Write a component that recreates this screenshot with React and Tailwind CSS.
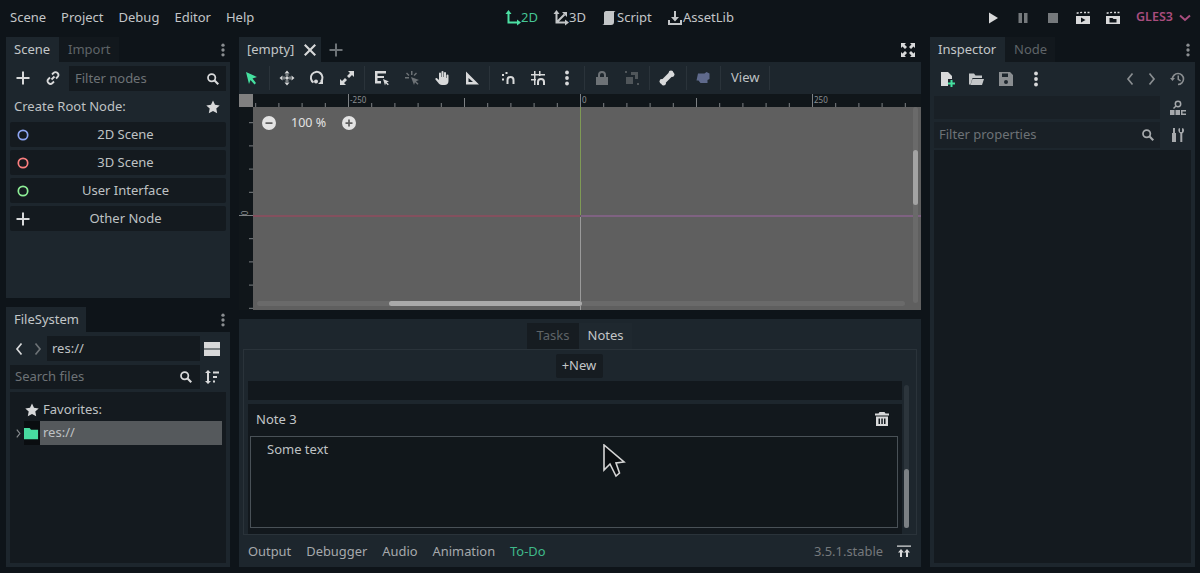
import React from "react";

const Icon = ({ className = "", size = 16, children, vb = "0 0 16 16" }) => (
  <svg width={size} height={size} viewBox={vb} className={"shrink-0 " + className} fill="currentColor">
    {children}
  </svg>
);

const Plus = ({ className }) => (
  <Icon className={className}>
    <path d="M7 1.5h2V7h5.5v2H9v5.500H7V9H1.500V7H7z" />
  </Icon>
);
const Dots = ({ className }) => (
  <Icon className={className}>
    <circle cx="8" cy="2.500" r="1.900" />
    <circle cx="8" cy="8" r="1.900" />
    <circle cx="8" cy="13.500" r="1.900" />
  </Icon>
);
const Search = ({ className }) => (
  <Icon className={className}>
    <circle cx="6.500" cy="6.500" r="4.200" fill="none" stroke="currentColor" strokeWidth="2" />
    <path d="M9.500 9.500l4.500 4.500" stroke="currentColor" strokeWidth="2.400" />
  </Icon>
);
const Star = ({ className }) => (
  <Icon className={className}>
    <path d="M8 1.500l2 4.300 4.700.6-3.400 3.200.9 4.700L8 12l-4.200 2.300.9-4.700L1.300 6.400 6 5.800z" />
  </Icon>
);
const Ring = ({ color }) => (
  <svg width="16" height="16" viewBox="0 0 16 16" className="shrink-0">
    <circle cx="8" cy="8" r="4.700" fill="none" stroke={color} strokeWidth="1.700" />
  </svg>
);
const Chev = ({ dir = "left", className }) => (
  <Icon className={className}>
    <path
      d={dir === "left" ? "M10.500 2.500L6 8l4.500 5.500" : "M5.500 2.500L10 8l-4.500 5.500"}
      fill="none"
      stroke="currentColor"
      strokeWidth="1.700"
    />
  </Icon>
);

const Menu = () => (
  <div className="h-[37px] flex items-center pb-[2px] pl-[10px] pr-[7px] text-[13px]">
    <div className="w-[495px] flex gap-[15px] text-[#c3c6c8]">
      <span>Scene</span>
      <span>Project</span>
      <span>Debug</span>
      <span>Editor</span>
      <span>Help</span>
    </div>
    <div className="flex items-center text-[#c3c6c8]">
      <Icon className="text-[#4ce0a3]">
        <path d="M3.500 3v9.500H13" fill="none" stroke="currentColor" strokeWidth="2" />
        <path d="M3.500 0L6.500 4h-6zM16 12.500l-4 3v-6z" />
      </Icon>
      <span className="w-[32px] text-[#45c795]">2D</span>
      <Icon>
        <path d="M3.500 3v9.500H13M3.500 12.500l8-8" fill="none" stroke="currentColor" strokeWidth="2" />
        <path d="M3.500 0L6.500 4h-6zM16 12.500l-4 3v-6zM14 2v5l-5-5z" />
      </Icon>
      <span className="w-[32px]">3D</span>
      <Icon>
        <path d="M5 1h10c-1.500 0-2 1-2 2v9c0 2-1 3-3 3H1c1.500 0 2-1 2-2V3c0-1 1-2 2-2z" />
      </Icon>
      <span className="w-[50px]">Script</span>
      <Icon>
        <path d="M7 1h2v6h3l-4 4.500L4 7h3zM1 10h2v3h10v-3h2v5H1z" />
      </Icon>
      <span>AssetLib</span>
    </div>
    <div className="ml-auto flex items-center text-[#d8d9da]">
      <Icon className="mr-[14px]">
        <path d="M4 2.500l9 5.500-9 5.500z" />
      </Icon>
      <Icon className="mr-[14px] text-[#75797c]">
        <path d="M3.500 3h3.500v10H3.500zM9 3h3.500v10H9z" />
      </Icon>
      <Icon className="mr-[14px] text-[#75797c]">
        <path d="M3 3h10v10H3z" />
      </Icon>
      <Icon className="mr-[14px]">
        <path d="M1 6h14v8H1zM1.500 2.500l2-.4.3 1.400-2 .4zM5 2l2-.2.2 1.300-2 .2zM9 1.800h2v1.400H9zM12.500 1.800h2v1.400h-2z" />
        <path d="M6 7.500l4.500 2.500L6 12.500z" fill="#0e1419" />
      </Icon>
      <Icon className="mr-[15px]">
        <path d="M1 6h14v8H1zM1.500 2.500l2-.4.3 1.400-2 .4zM5 2l2-.2.2 1.300-2 .2zM9 1.800h2v1.400H9zM12.500 1.800h2v1.400h-2z" />
        <path d="M4.500 8h3l1 1h3v3.500h-7z" fill="#0e1419" />
      </Icon>
      <span className="font-semibold text-[#a84d7e] text-[12.500px] w-[41px]">GLES3</span>
      <Icon className="text-[#a84d7e]">
        <path d="M3 5.500L8 10l5-4.500" fill="none" stroke="currentColor" strokeWidth="2" />
      </Icon>
    </div>
  </div>
);

const Tab = ({ active, children, className = "" }) => (
  <div
    className={
      "h-[25px] flex items-center " +
      (active ? "bg-[#1d262d] text-[#c3c6c8] " : "bg-[#12181d] text-[#5f6468] ") +
      className
    }
  >
    {children}
  </div>
);

const RootButton = ({ icon, label }) => (
  <div className="h-[25px] bg-[#141a1f] rounded-[2px] flex items-center pl-[5px] text-[#bfc2c4] text-[13px]">
    {icon}
    <span className="flex-1 text-center pr-[6px]">{label}</span>
  </div>
);

const ScenePanel = () => (
  <div className="h-[261px] flex flex-col">
    <div className="flex items-center">
      <Tab active className="w-[53px] pl-[8px] text-[13px]">Scene</Tab>
      <Tab className="w-[60px] pl-[9px] text-[13px]">Import</Tab>
      <Dots className="ml-auto size-[14px] text-[#8a8e91]" />
    </div>
    <div className="flex-1 bg-[#1d262d] px-[4px] flex flex-col">
      <div className="h-[32px] flex items-center text-[#d8d9da]">
        <Plus className="ml-[5px]" />
        <Icon className="ml-[14px]">
          <path
            d="M6.500 9.500l3-3M7 4.500l1.500-1.500a2.800 2.800 0 014 4L11 8.500M9 11.500L7.500 13a2.800 2.800 0 01-4-4L5 7.500"
            fill="none"
            stroke="currentColor"
            strokeWidth="1.800"
          />
        </Icon>
        <div className="ml-[8px] w-[157px] h-[25px] bg-[#141a1f] flex items-center pt-[1px] pl-[6px] pr-[6px] text-[13px] text-[#6d7276]">
          Filter nodes
          <Search className="ml-auto size-[14px] text-[#d8d9da]" />
        </div>
      </div>
      <div className="h-[26px] flex items-center pl-[4px] pr-[5px] text-[13px] text-[#bfc2c4]">
        Create Root Node:
        <Star className="ml-auto text-[#d8d9da]" />
      </div>
      <div className="flex flex-col gap-[3px] mt-[2px]">
        <RootButton icon={<Ring color="#8da5f3" />} label="2D Scene" />
        <RootButton icon={<Ring color="#fc7f7f" />} label="3D Scene" />
        <RootButton icon={<Ring color="#8eef97" />} label="User Interface" />
        <RootButton icon={<Plus className="text-[#d8d9da]" />} label="Other Node" />
      </div>
    </div>
  </div>
);

const FilePanel = () => (
  <div className="flex-1 flex flex-col mt-[9px]">
    <div className="flex items-center">
      <Tab active className="w-[80px] pl-[8px] text-[13px]">FileSystem</Tab>
      <Dots className="ml-auto size-[14px] text-[#8a8e91]" />
    </div>
    <div className="flex-1 bg-[#1d262d] px-[4px] pb-[4px] flex flex-col">
      <div className="h-[33px] flex items-center text-[#d8d9da]">
        <Chev className="ml-[1px]" />
        <Chev dir="right" className="ml-[3px] text-[#6d7276]" />
        <div className="ml-[1px] w-[153px] h-[25px] bg-[#141a1f] flex items-center pl-[5px] text-[13px] text-[#bfc2c4]">
          res://
        </div>
        <Icon className="ml-[4px] size-[16px]">
          <path d="M0 1h16v6.500H0zM0 8.500h16V15H0z" />
        </Icon>
      </div>
      <div className="h-[24px] flex items-center text-[#d8d9da]">
        <div className="w-[190px] h-[24px] bg-[#141a1f] flex items-center pl-[5px] pr-[7px] text-[13px] text-[#6d7276]">
          Search files
          <Search className="ml-auto size-[14px] text-[#d8d9da]" />
        </div>
        <Icon className="ml-[4px]">
          <path d="M4 1l3 3H5v8h2l-3 3-3-3h2V4H1zM9 2.500h6v2H9zM9 7h4v2H9zM9 11.500h2v2H9z" />
        </Icon>
      </div>
      <div className="flex-1 mt-[3px] bg-[#141a1f] pt-[8px] pr-[4px] text-[13px] text-[#bfc2c4]">
        <div className="h-[20px] flex items-center pl-[14px] gap-[3px]">
          <Star className="text-[#d8d9da]" />
          Favorites:
        </div>
        <div className="h-[24px] flex items-center mt-[1px]">
          <Chev dir="right" className="size-[11px] ml-[3px] text-[#888c8f]" />
          <div className="w-[16px] h-[24px] bg-[#0a0d10] flex items-center">
            <Icon className="size-[15px] text-[#48dba0]">
              <path d="M0 2h6l1.500 2H15v10H0z" />
            </Icon>
          </div>
          <div className="flex-1 h-[24px] bg-[#55595c] flex items-center pl-[3px]">res://</div>
        </div>
      </div>
    </div>
  </div>
);

const Sep = ({ className = "" }) => <div className={"w-[1px] h-[24px] bg-[#2a333a] shrink-0 " + className} />;

const ToolIcon = ({ children, className = "" }) => (
  <div className={"w-[30px] flex justify-center shrink-0 " + className}>{children}</div>
);

const Toolbar = () => (
  <div className="h-[32px] bg-[#1d262d] flex items-center text-[#d8d9da]">
    <ToolIcon className="pr-[4px]">
      <Icon className="text-[#45e0a0]">
        <path d="M2 2l11 5-4.500 1.500L12 13l-1.500 1.500-4-4.500L5 14z" />
      </Icon>
    </ToolIcon>
    <Sep />
    <ToolIcon className="ml-[2px]">
      <Icon>
        <path d="M8 .5l2.500 3h-5zM8 15.500l-2.500-3h5zM.5 8l3-2.500v5zM15.500 8l-3 2.500v-5z" />
        <circle cx="8" cy="8" r="1.800" />
        <path d="M6.500 4.500h3v1h-3zM6.500 10.500h3v1h-3zM4.500 6.500h1v3h-1zM10.500 6.500h1v3h-1z" />
      </Icon>
    </ToolIcon>
    <ToolIcon>
      <Icon>
        <path d="M4.500 12.500A5.800 5.800 0 1112 11.500" fill="none" stroke="currentColor" strokeWidth="2" />
        <path d="M9 14h5v-5zM7 9.500a2 2 0 100 4 2 2 0 000-4z" />
      </Icon>
    </ToolIcon>
    <ToolIcon>
      <Icon>
        <path d="M9 1h6v6l-2-2-3 3-2-2 3-3zM1 9l2 2 3-3 2 2-3 3 2 2H1z" />
      </Icon>
    </ToolIcon>
    <Sep className="ml-[2px]" />
    <ToolIcon className="ml-[2px]">
      <Icon>
        <path d="M1 1h11v2.500H3.500V6H10v2H3.500v3H7v2.500H1z" />
        <path d="M9 9l6 2.500-2.200.8 2 2-1 1-2-2-.8 2.200z" />
      </Icon>
    </ToolIcon>
    <ToolIcon className="text-[#6d7276]">
      <Icon>
        <path d="M7 1h1.500v4H7zM1 7h4v1.500H1zM3 2.500L5.500 5 4.500 6 2 3.500zM12 2.500l1 1L10.500 6l-1-1z" />
        <path d="M7 7l8 3-3 1.200 2.500 2.500-1 1-2.500-2.500L10 15z" />
      </Icon>
    </ToolIcon>
    <ToolIcon>
      <Icon>
        <path d="M5 3.500a1 1 0 012 0V7h.5V2a1 1 0 012 0v5h.5V3a1 1 0 012 0v5h.5V5.500a1 1 0 012 0V11c0 2.500-1.500 4-4 4H8c-2 0-3-1-4-2.500L1.500 9.500c-.7-1 .7-2 1.500-1.200L5 10z" />
      </Icon>
    </ToolIcon>
    <ToolIcon>
      <Icon>
        <path d="M2 1.500l13 13H2zM4.500 8v4H9z" fillRule="evenodd" />
      </Icon>
    </ToolIcon>
    <Sep className="ml-[2px]" />
    <ToolIcon className="ml-[3px]">
      <Icon>
        <path d="M7.500 14V10a3 3 0 016 0v4" fill="none" stroke="currentColor" strokeWidth="2" />
        <path d="M2 4h2v2H2zM5.500 2h2v2h-2zM2 8.500h2v2H2z" />
      </Icon>
    </ToolIcon>
    <ToolIcon>
      <Icon>
        <path d="M4 1h1.500v14H4zM9 1h1.500v5H9zM1 4h14v1.500H1zM1 9h5v1.500H1z" />
        <path d="M8 15v-3a3 3 0 016 0v3" fill="none" stroke="currentColor" strokeWidth="2" />
      </Icon>
    </ToolIcon>
    <ToolIcon className="ml-[-1px]">
      <Dots />
    </ToolIcon>
    <Sep className="ml-[2px]" />
    <ToolIcon className="ml-[2px] text-[#6d7276]">
      <Icon>
        <path fillRule="evenodd" d="M4 7V5a4 4 0 018 0v2h2v8H2V7zm2 0h4V5a2 2 0 00-4 0z" />
      </Icon>
    </ToolIcon>
    <ToolIcon className="text-[#50565a]">
      <Icon>
        <path d="M7 2h7v7h-3V5H7zM2 7h7v7H2zM1 1h2v2H1zM13 13h2v2h-2z" />
      </Icon>
    </ToolIcon>
    <Sep className="ml-[2px]" />
    <ToolIcon className="ml-[2px]">
      <Icon>
        <circle cx="12" cy="2.800" r="2.300" />
        <circle cx="13.200" cy="4.600" r="2.300" />
        <circle cx="2.800" cy="11.400" r="2.300" />
        <circle cx="4.600" cy="13.200" r="2.300" />
        <path d="M10 2.500l3.500 3.500-7.500 7.500-3.500-3.500z" />
      </Icon>
    </ToolIcon>
    <Sep className="ml-[4px]" />
    <ToolIcon className="ml-[1px] text-[#5f6a8c]">
      <Icon>
        <path d="M3 3.500h6.500l2-1.500 3 1.500V9l-2 1v3H5.500l-2-2.500H1.500z" />
      </Icon>
    </ToolIcon>
    <Sep className="ml-[2px]" />
    <span className="w-[48px] pl-[10px] text-[13px] text-[#bfc2c4]">View</span>
    <Sep />
  </div>
);

const HRuler = () => {
  const ticks = [];
  for (let i = -14; i <= 15; i++) ticks.push(i);
  return (
    <svg width="668" height="13" className="block">
      {ticks.map(i => {
        const x = 327.500 + i * 23.200;
        const big = i % 10 === 0;
        const mid = i % 5 === 0;
        return (
          <line key={i} x1={x} x2={x} y1={big ? 0 : mid ? 4 : 9} y2="13" stroke="#7d8184" strokeWidth="1" />
        );
      })}
      <text x="97" y="9" fontSize="8" fill="#8a8e91">-250</text>
      <text x="329" y="9" fontSize="8" fill="#8a8e91">0</text>
      <text x="561" y="9" fontSize="8" fill="#8a8e91">250</text>
    </svg>
  );
};

const VRuler = () => {
  const ticks = [];
  for (let i = -4; i <= 4; i++) ticks.push(i);
  return (
    <svg width="14" height="203" className="block shrink-0 bg-[#10161a]">
      {ticks.map(i => {
        const y = 108.500 + i * 23.200;
        return <line key={i} x1={i === 0 ? 0 : 10} x2="14" y1={y} y2={y} stroke="#7d8184" strokeWidth="1" />;
      })}
      <text x="6" y="109" fontSize="8" fill="#8a8e91" textAnchor="middle" transform="rotate(-90 6 106)">0</text>
    </svg>
  );
};

const Viewport = () => (
  <div className="h-[216px] flex flex-col">
    <div className="h-[13px] flex bg-[#10161a]">
      <div className="w-[14px] bg-[#808080]" />
      <HRuler />
    </div>
    <div className="flex-1 flex">
      <VRuler />
      <div className="flex-1 bg-[#5f5f5f] relative overflow-hidden">
        <div className="absolute left-0 w-[327px] top-[108px] h-[2px] bg-[#84505e]" />
        <div className="absolute left-[328px] right-0 top-[108px] h-[2px] bg-[#7f6282]" />
        <div className="absolute top-0 h-[108px] left-[327px] w-[1px] bg-[#7f9a55]" />
        <div className="absolute top-[110px] bottom-0 left-[327px] w-[1px] bg-[#9a9a9a]" />
        <div className="absolute left-[9px] top-[7px] flex items-center text-[#e3e3e3]">
          <Icon className="size-[14px]">
            <path fillRule="evenodd" d="M8 0a8 8 0 110 16A8 8 0 018 0zM4 7v2h8V7z" />
          </Icon>
          <span className="ml-[15px] text-[12.500px] w-[51px]">100 %</span>
          <Icon className="size-[14px]">
            <path fillRule="evenodd" d="M8 0a8 8 0 110 16A8 8 0 018 0zM7 4v3H4v2h3v3h2V9h3V7H9V4z" />
          </Icon>
        </div>
        <div className="absolute right-[3px] top-0 bottom-[7px] w-[5px] rounded-[3px] bg-[#6a6a6a]" />
        <div className="absolute right-[3px] top-[43px] h-[55px] w-[5px] rounded-[3px] bg-[#a3a3a3]" />
        <div className="absolute left-[4px] right-[16px] bottom-[4px] h-[5px] rounded-[3px] bg-[#6a6a6a]" />
        <div className="absolute left-[136px] w-[193px] bottom-[4px] h-[5px] rounded-[3px] bg-[#a9a9a9]" />
      </div>
    </div>
  </div>
);

const NotesPanel = () => (
  <div className="h-[248px] mt-[9px] bg-[#1d262d] flex flex-col">
    <div className="h-[30px] flex items-end justify-center pt-[4px] text-[13px] pr-[1px]">
      <div className="w-[52px] h-[26px] bg-[#161c21] text-[#5f6468] flex items-center justify-center">Tasks</div>
      <div className="w-[53px] h-[26px] bg-[#1f282f] text-[#c3c6c8] flex items-center justify-center">Notes</div>
    </div>
    <div className="h-[186px] mx-[4px] border border-[#2a333a] px-[4px] pt-[4px] flex">
      <div className="w-[654px] flex flex-col">
        <div className="flex justify-center pl-[8px]">
          <div className="h-[24px] w-[47px] bg-[#161c21] rounded-[2px] text-[13px] text-[#c3c6c8] flex items-center justify-center">
            +New
          </div>
        </div>
        <div className="h-[19px] mt-[3px] bg-[#12181d]" />
        <div className="h-[131px] mt-[4px] bg-[#12181d] px-[2px] flex flex-col">
          <div className="h-[31px] flex items-center px-[6px] text-[13px] text-[#c3c6c8]">
            Note 3
            <Icon className="ml-auto mr-[4px] text-[#d8d9da]">
              <path fillRule="evenodd" d="M5.500 1h5l1 1.500H15v2H1v-2h3.500zM2 5.500h12V15H2zM4.500 7.500v5.500h1.500V7.500zm2.800 0v5.500h1.500V7.500zm2.700 0v5.500h1.500V7.500z" />
            </Icon>
          </div>
          <div className="w-[648px] h-[92px] mt-[1px] border border-[#495157] bg-[#11171b] pl-[16px] pt-[3px] text-[13px] text-[#bfc2c4]">
            Some text
          </div>
        </div>
      </div>
      <div className="w-[5px] ml-[2px] mt-[31px] h-[143px] rounded-[3px] bg-[#2c353c] relative">
        <div className="absolute bottom-0 left-0 right-0 h-[59px] rounded-[3px] bg-[#7b8084]" />
      </div>
    </div>
    <div className="flex-1 flex items-center pt-[2px] pl-[9px] pr-[9px] text-[12.900px] text-[#a6a9ac] gap-[15px]">
      <span>Output</span>
      <span>Debugger</span>
      <span>Audio</span>
      <span>Animation</span>
      <span className="text-[#3fb98a]">To-Do</span>
      <span className="ml-auto text-[#75797c]">3.5.1.stable</span>
      <Icon className="ml-[-2px] text-[#d8d9da]">
        <path d="M1 1.500h14v1.200H1zM5 5l3 3.500H6V13H4V8.500H2zM11 5l3 3.500h-2V13h-2V8.500H8z" />
      </Icon>
    </div>
  </div>
);

const Inspector = () => (
  <div className="w-[265px] ml-[9px] flex flex-col">
    <div className="flex items-center">
      <Tab active className="w-[75px] pl-[8px] text-[13px]">Inspector</Tab>
      <Tab className="w-[50px] pl-[9px] text-[13px]">Node</Tab>
      <Dots className="ml-auto size-[14px] text-[#8a8e91]" />
    </div>
    <div className="flex-1 bg-[#1d262d] px-[4px] pb-[4px] flex flex-col">
      <div className="h-[34px] flex items-center text-[#d8d9da]">
        <Icon className="ml-[5px]">
          <path d="M2 1h7l4 4v3H9v7H2z" />
          <path d="M11.500 9h2v2.500H16v2h-2.500V16h-2v-2.500H9v-2h2.500z" fill="#45e0a0" />
        </Icon>
        <Icon className="ml-[13px] text-[#c3c6c8]">
          <path d="M1 2.500h5l1.500 2H14V7H4.500L2.500 13.500H1zM4.500 8H16l-2 6H2.500z" />
        </Icon>
        <Icon className="ml-[14px] text-[#8a8e91]">
          <path fillRule="evenodd" d="M1 1h11l3 3v11H1zM4 2.500V6h6V2.500zM8 9a2 2 0 100 4 2 2 0 000-4z" />
        </Icon>
        <Dots className="ml-[14px]" />
        <Chev className="ml-[78px] text-[#8a8e91]" />
        <Chev dir="right" className="ml-[6px] text-[#8a8e91]" />
        <Icon className="ml-[10px] text-[#8a8e91]">
          <path d="M2.500 8a5.500 5.500 0 115.500 5.500" fill="none" stroke="currentColor" strokeWidth="1.600" />
          <path d="M0 7l2.500 3L5 7zM7.500 4.500H9V8l2 1.200-.7 1.200-2.800-1.700z" />
        </Icon>
      </div>
      <div className="h-[23px] flex items-center">
        <div className="w-[226px] h-[23px] bg-[#192026]" />
        <Icon className="ml-[10px] text-[#a6a9ac]">
          <circle cx="8" cy="4" r="2.700" fill="none" stroke="currentColor" strokeWidth="1.500" />
          <path d="M6 6l-2.500 2.500" stroke="currentColor" strokeWidth="1.500" />
          <path d="M0 10h4.500v5H0zM5.500 10h4.500v5H5.500zM11 10h5v1.500h-3.500v2H16V15h-5z" />
        </Icon>
      </div>
      <div className="h-[26px] mt-[3px] flex items-center">
        <div className="w-[226px] h-[26px] bg-[#192026] flex items-center pl-[5px] pr-[5px] text-[13px] text-[#6d7276]">
          Filter properties
          <Search className="ml-auto size-[14px] text-[#a6a9ac]" />
        </div>
        <Icon className="ml-[10px] text-[#a6a9ac]">
          <path d="M3 1h2v5h1v9H2V6h1zM9 1l1 .5V5h2V1.500L13 1c1.500 1.500 1.500 4-.7 5.500V15h-2V6.500C8 5 8 2.500 9 1z" />
        </Icon>
      </div>
      <div className="flex-1 mt-[2px] bg-[#141a1f]" />
    </div>
  </div>
);

const App = () => (
  <div
    className="w-[1200px] h-[573px] overflow-hidden relative bg-[#0e1419] flex flex-col"
    style={{ fontFamily: '"Noto Sans", sans-serif' }}
  >
    <Menu />
    <div className="flex pl-[6px] h-[530px]">
      <div className="w-[224px] flex flex-col">
        <ScenePanel />
        <FilePanel />
      </div>
      <div className="w-[682px] ml-[9px] flex flex-col">
        <div className="h-[25px] flex items-center">
          <Tab active className="w-[82px] pl-[8px] text-[13px]">
            [empty]
            <Icon className="ml-auto mr-[3px] text-[#d8d9da]">
              <path d="M3.500 2l4.500 4.500L12.500 2 14 3.500 9.500 8l4.500 4.500-1.500 1.500L8 9.500 3.500 14 2 12.500 6.500 8 2 3.500z" />
            </Icon>
          </Tab>
          <Plus className="ml-[7px] text-[#6d7276]" />
          <Icon className="ml-auto mr-[5px] text-[#d8d9da]">
            <path d="M1 1h5L4.500 2.500 7 5 5 7 2.500 4.500 1 6zM15 1v5l-1.500-1.500L11 7 9 5l2.500-2.500L10 1zM1 15v-5l1.500 1.500L5 9l2 2-2.500 2.500L6 15zM15 15h-5l1.500-1.500L9 11l2-2 2.500 2.500L15 10z" />
          </Icon>
        </div>
        <Toolbar />
        <Viewport />
        <NotesPanel />
      </div>
      <Inspector />
    </div>
    <svg width="24" height="34" viewBox="0 0 24 34" className="absolute left-[603px] top-[444px]">
      <path d="M1 1v25l6-6 6 12 3.500-3L13 19l8-1z" fill="#0a0d10" stroke="#d5d5d5" strokeWidth="1.600" />
    </svg>
  </div>
);

export default App;
